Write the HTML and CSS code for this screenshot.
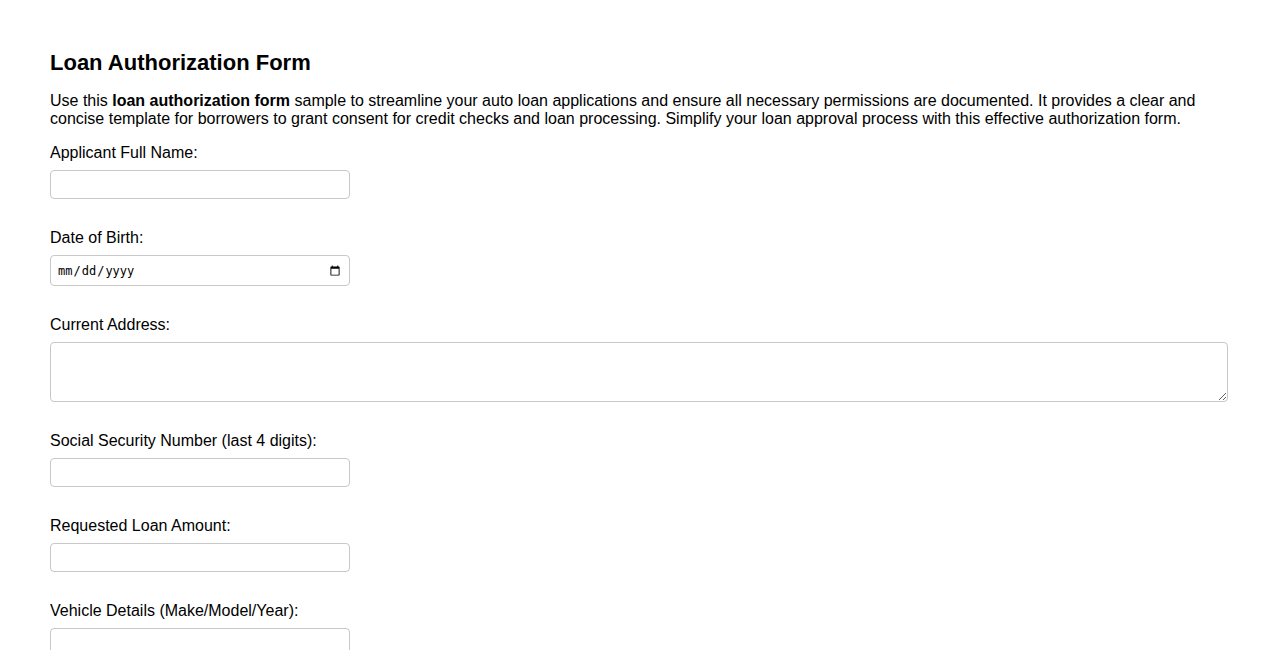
FILE: index.html
```html
<!DOCTYPE html>
<html lang="en">
<head>
<meta charset="utf-8">
<title>Loan Authorization Form</title>
<link rel="stylesheet" href="styles.css">
</head>
<body>
<div class="container">
  <h1 class="title">Loan Authorization Form</h1>
  <p class="intro">Use this <strong>loan authorization form</strong> sample to streamline your auto loan applications and ensure all necessary permissions are documented. It provides a clear and concise template for borrowers to grant consent for credit checks and loan processing. Simplify your loan approval process with this effective authorization form.</p>
  <form class="form">
    <label class="label" for="name">Applicant Full Name:</label>
    <input class="field" type="text" id="name">
    <label class="label" for="dob">Date of Birth:</label>
    <input class="field field-date" type="date" id="dob">
    <label class="label" for="addr">Current Address:</label>
    <textarea class="area" id="addr"></textarea>
    <label class="label" for="ssn">Social Security Number (last 4 digits):</label>
    <input class="field" type="text" id="ssn">
    <label class="label" for="amt">Requested Loan Amount:</label>
    <input class="field" type="text" id="amt">
    <label class="label" for="veh">Vehicle Details (Make/Model/Year):</label>
    <input class="field" type="text" id="veh">
  </form>
</div>
</body>
</html>
```
FILE: styles.css
```css
html, body {
  margin: 0;
  padding: 0;
  background: #fff;
}
body {
  font-family: "Liberation Sans", Arial, sans-serif;
  font-size: 16px;
  color: #000;
}
.container {
  padding: 50px 50px 40px;
}
.title {
  font-size: 22px;
  line-height: 25px;
  font-weight: bold;
  margin: 0 0 17px;
}
.intro {
  margin: 0 0 15px;
  line-height: 18px;
}
.label {
  display: block;
  line-height: 18px;
  padding-top: 1px;
  margin-bottom: 8px;
}
.field {
  display: block;
  box-sizing: border-box;
  width: 300px;
  height: 29px;
  padding: 0 6px;
  border: 1px solid #c8c8c8;
  border-radius: 4px;
  margin: 0 0 29px;
  font-size: 13.33px;
  background: #fff;
}
.field-date {
  height: 31px;
  font-family: "DejaVu Sans Mono", monospace;
  font-size: 12px;
}
.area {
  display: block;
  box-sizing: border-box;
  width: 100%;
  height: 60px;
  border: 1px solid #c8c8c8;
  border-radius: 4px;
  margin: 0 0 29px;
  padding: 6px;
  resize: vertical;
}
```
